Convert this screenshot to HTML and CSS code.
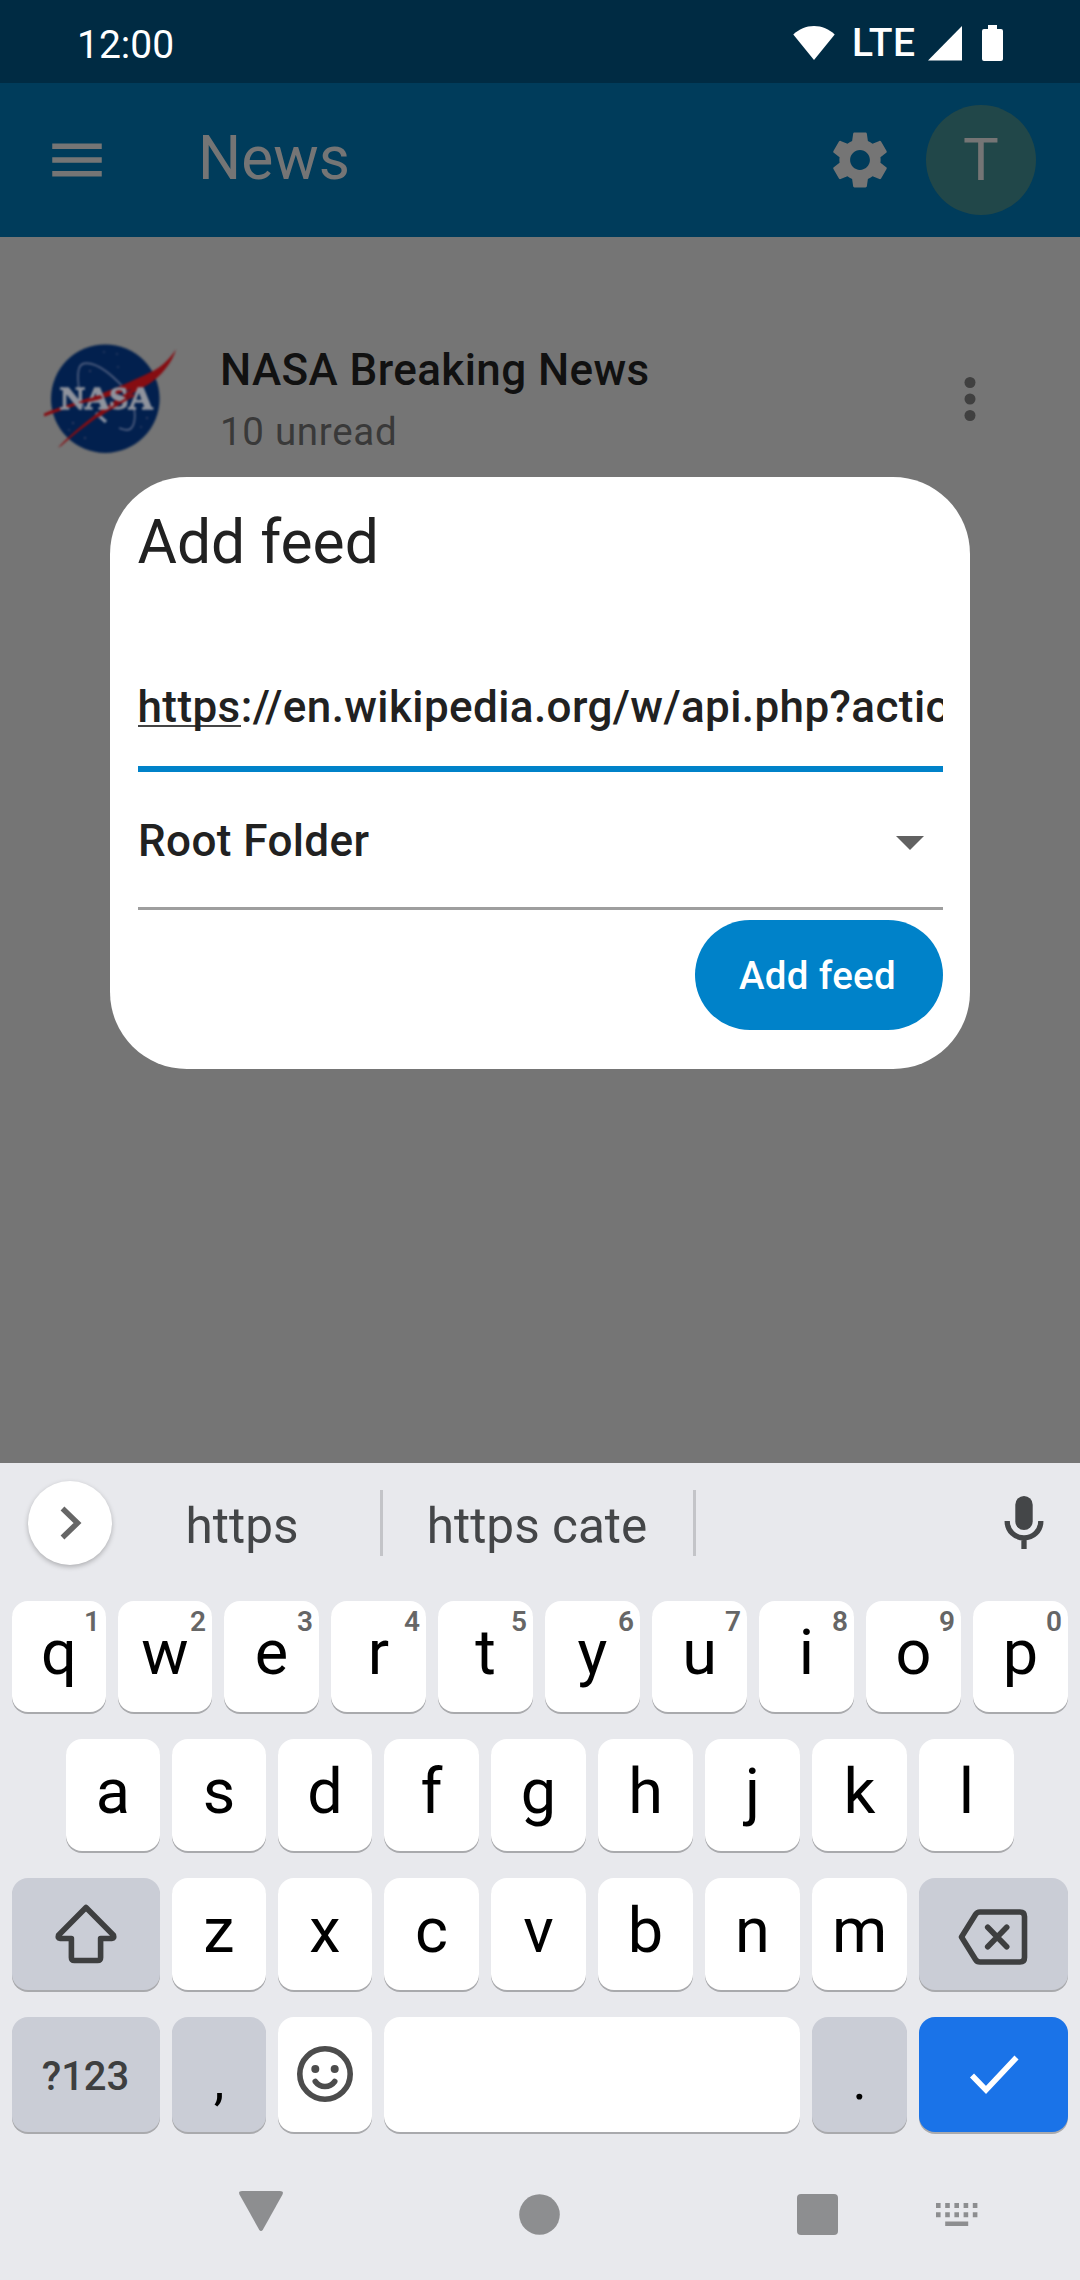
FILE: index.html
```html
<!DOCTYPE html>
<html lang="en">
<head>
<meta charset="utf-8">
<title>News</title>
<link rel="stylesheet" href="styles.css">
</head>
<body>
<div class="screen">
  <header class="status">
    <span class="clock">12:00</span>
    <svg class="wifi" width="42" height="36" viewBox="0 0 42 36"><path d="M21 35 0.3 9.6C6 4 13 1 21 1s15 3 20.700 8.600z"/></svg>
    <span class="lte">LTE</span>
    <svg class="signal" width="34" height="36" viewBox="0 0 34 36"><path d="M0 35.500 34 1v34.500z"/></svg>
    <svg class="battery" width="21" height="36" viewBox="0 0 21 36"><path d="M6 0h9v4h4a2 2 0 0 1 2 2v28a2 2 0 0 1-2 2H2a2 2 0 0 1-2-2V6a2 2 0 0 1 2-2h4z"/></svg>
  </header>
  <div class="appbar">
    <svg class="menu" width="66" height="66" viewBox="0 0 24 24"><path d="M3 18h18v-2H3v2zm0-5h18v-2H3v2zm0-7v2h18V6H3z"/></svg>
    <h1 class="apptitle">News</h1>
    <svg class="gear" width="66" height="66" viewBox="0 0 24 24"><path d="M19.430 12.980c.04-.32.07-.64.07-.98s-.03-.66-.07-.98l2.110-1.650c.19-.15.24-.42.12-.64l-2-3.460c-.12-.22-.39-.3-.61-.22l-2.490 1c-.52-.4-1.080-.73-1.690-.98l-.38-2.650C14.460 2.180 14.250 2 14 2h-4c-.25 0-.46.18-.49.42l-.38 2.650c-.61.25-1.170.59-1.690.98l-2.490-1c-.23-.09-.49 0-.61.22l-2 3.460c-.13.22-.07.49.12.64l2.110 1.650c-.04.32-.07.65-.07.98s.03.66.07.98l-2.110 1.650c-.19.15-.24.42-.12.64l2 3.460c.12.22.39.3.61.22l2.490-1c.52.4 1.080.73 1.690.98l.38 2.650c.03.24.24.42.49.42h4c.25 0 .46-.18.49-.42l.38-2.650c.61-.25 1.170-.59 1.690-.98l2.490 1c.23.09.49 0 .61-.22l2-3.460c.12-.22.07-.49-.12-.64l-2.110-1.650zM12 15.600c-1.980 0-3.600-1.620-3.600-3.600s1.620-3.600 3.600-3.600 3.600 1.620 3.600 3.600-1.620 3.600-3.600 3.600z"/></svg>
    <div class="avatar">T</div>
  </div>
  <main class="feeds">
    <article class="feed">
      <svg class="logo" width="132" height="140" viewBox="44 330 132 140">
        <circle cx="105.300" cy="398.700" r="54.300" fill="#02204e"/>
        <g fill="none" stroke="#4a5a7c" stroke-width="1.800">
          <path d="M84 408C77 388 75 365 84 363.500C98 361 116 378 132 397"/>
          <path d="M133 404C137 418 134 430 127 430c-3 0-5-1-8-2"/>
          <path d="M96 413l10 9" stroke="#8790a0" stroke-width="3.500"/>
        </g>
        <g fill="#2c3c60"><circle cx="117" cy="354" r="1"/><circle cx="104" cy="352" r="1"/><circle cx="90" cy="371" r="1.200"/><circle cx="73" cy="423" r="1.200"/><circle cx="85" cy="438" r="1.200"/><circle cx="147" cy="418" r="1.200"/><circle cx="141" cy="427" r="1"/><circle cx="69" cy="430" r="1"/><circle cx="118" cy="367" r="1"/></g>
        <path d="M76 402C112 391 136 379 153 371C163 366 170 358 176 349.500C172 363 161 376 149 384C124 398 96 416 61 446L58 447.500C82 423 108 405 132 389C112 396 94 401 76 404Z" fill="#860d12"/>
        <path d="M44 413.500C52 410 62 406 78 402v3C64 409 54 413 44 416.500Z" fill="#860d12"/>
        <text x="60" y="409" class="logotext" textLength="93" lengthAdjust="spacingAndGlyphs">NASA</text>
        <path d="M78 402c10-3 17-5 22-7l3 3c-8 3-15 4-23 5zM97 416c9-6 22-14 36-22l2 2c-12 6-25 14-36 21z" fill="#860d12"/>
      </svg>
      <div class="feedtext">
        <div class="feedname">NASA Breaking News</div>
        <div class="feedcount">10 unread</div>
      </div>
      <svg class="more" width="66" height="66" viewBox="0 0 24 24"><circle cx="12" cy="6" r="2"/><circle cx="12" cy="12" r="2"/><circle cx="12" cy="18" r="2"/></svg>
    </article>
    <section class="dialog">
      <h2 class="dialogtitle">Add feed</h2>
      <div class="url"><span class="composing">https</span>://en.wikipedia.org/w/api.php?action</div>
      <div class="folder"><span>Root Folder</span><svg width="28" height="14" viewBox="0 0 28 14"><path d="M0 0h28L14 14z"/></svg></div>
      <button class="add">Add feed</button>
    </section>
  </main>
  <section class="keyboard">
    <div class="suggestions">
      <div class="expand"><svg width="22" height="34" viewBox="0 0 22 34"><path d="M2.500 2.500 17.500 17l-15 14.500"/></svg></div>
      <span class="word first">https</span>
      <span class="word second">https cate</span>
      <svg class="mic" width="66" height="66" viewBox="0 0 66 66"><rect x="24.300" y="6" width="17.400" height="34" rx="8.700"/><path d="M16.200 31c0 10 7.500 16.800 16.800 16.800S49.800 41 49.800 31M33 48v11" class="line"/></svg>
    </div>
    <div class="row r1">
      <div class="key">q<sup>1</sup></div><div class="key">w<sup>2</sup></div><div class="key">e<sup>3</sup></div><div class="key">r<sup>4</sup></div><div class="key">t<sup>5</sup></div><div class="key">y<sup>6</sup></div><div class="key">u<sup>7</sup></div><div class="key">i<sup>8</sup></div><div class="key">o<sup>9</sup></div><div class="key">p<sup>0</sup></div>
    </div>
    <div class="row r2">
      <div class="key">a</div><div class="key">s</div><div class="key">d</div><div class="key">f</div><div class="key">g</div><div class="key">h</div><div class="key">j</div><div class="key">k</div><div class="key">l</div>
    </div>
    <div class="row r3">
      <div class="key dark icon"><svg width="66" height="64" viewBox="0 0 66 64"><path d="M33 5.500 60.500 33.200Q61.500 36.500 59 36.500H47.600V55.500Q47.600 58.500 44.600 58.500H21.400Q18.400 58.500 18.400 55.500V36.500H7Q4.500 36.500 5.500 33.200Z"/></svg></div>
      <div class="key">z</div><div class="key">x</div><div class="key">c</div><div class="key">v</div><div class="key">b</div><div class="key">n</div><div class="key">m</div>
      <div class="key dark icon delete"><svg width="70" height="56" viewBox="0 0 70 56"><path d="M3.500 28 17.500 5.500Q19 3 22 3H62Q66.500 3 66.500 7.500V48.500Q66.500 53 62 53H22Q19 53 17.500 50.500ZM29.700 18.300l19 19.400M48.700 18.300l-19 19.400"/></svg></div>
    </div>
    <div class="row r4">
      <div class="key dark symbols">?123</div>
      <div class="key dark punct">,</div>
      <div class="key icon"><svg class="smile" width="58" height="58" viewBox="0 0 58 58"><circle cx="29" cy="29" r="25.200"/><circle cx="19.300" cy="24" r="4" class="eye"/><circle cx="38.700" cy="24" r="4" class="eye"/><path d="M19.300 36.500Q23 41.500 29 41.500T38.700 36.500"/></svg></div>
      <div class="key"></div>
      <div class="key dark punct">.</div>
      <div class="key enter icon"><svg width="50" height="40" viewBox="0 0 50 40"><path d="M3 20.500 17 35 47.500 2.500"/></svg></div>
    </div>
    <nav class="navbar">
      <svg class="back" width="44" height="40" viewBox="0 0 44 40"><path d="M3 0h38q4 0 2.500 3.500L24 38.500q-2 3-4 0L.5 3.500Q-1 0 3 0z"/></svg>
      <svg class="home" width="41" height="41" viewBox="0 0 41 41"><circle cx="20.500" cy="20.500" r="20.300"/></svg>
      <svg class="recent" width="41" height="41" viewBox="0 0 41 41"><rect width="41" height="41" rx="4"/></svg>
      <svg class="ime" width="42" height="24" viewBox="0 0 42 24"><path d="M0 0h4.600v5H0zM9.200 0h4.600v5H9.200zM18.400 0h4.600v5h-4.600zM27.600 0h4.600v5h-4.600zM36.800 0h4.600v5h-4.600zM0 9.200h4.600v5H0zM9.200 9.200h4.600v5H9.200zM18.400 9.200h4.600v5h-4.600zM27.600 9.200h4.600v5h-4.600zM36.800 9.200h4.600v5h-4.600zM9.200 18.400h23v4.600h-23z"/></svg>
    </nav>
  </section>
</div>
</body>
</html>
```
FILE: styles.css
```css
* { box-sizing: border-box; }
body { margin: 0; font-family: Roboto, "Liberation Sans", sans-serif; }
svg { display: block; flex: none; }
h1, h2 { margin: 0; font-weight: 400; }

.screen { width: 1080px; height: 2280px; display: flex; flex-direction: column; overflow: hidden; background: #757575; }

.status { flex: none; height: 83px; background: #002b43; color: #fff; fill: #fff; display: flex; align-items: flex-start; padding: 25px 77px 0 77px; }
.clock, .lte { white-space: nowrap; font-size: 39px; line-height: 46px; }
.clock { flex: 1; margin-top: -3px; }
.wifi { margin-right: 17px; }
.lte { width: 76px; font-weight: 500; letter-spacing: .5px; margin-top: -5px; }
.battery { margin-left: 20px; }

.appbar { flex: none; height: 154px; background: #003c5b; color: #757575; fill: #757575; display: flex; align-items: center; padding: 0 44px; }
.apptitle { flex: 1; font-size: 60.500px; line-height: 72px; margin-left: 88px; padding-bottom: 2px; }
.gear { margin-right: 33px; }
.avatar { width: 110px; height: 110px; border-radius: 50%; background: #214749; font-size: 60px; line-height: 110px; text-align: center; }

.feeds { flex: none; height: 1226px; position: relative; }
.feed { height: 140px; margin-top: 93px; padding: 0 77px 0 44px; display: flex; align-items: center; }
.feedtext { flex: 1; padding-left: 44px; }
.feedname { font-size: 44px; line-height: 56px; font-weight: 500; letter-spacing: .4px; color: #111; margin-top: 8px; }
.feedcount { font-size: 38.500px; line-height: 68px; letter-spacing: .7px; color: #393939; }
.more { fill: #404040; margin-bottom: 2px; }
.logo { filter: blur(.9px); }
.logotext { font: 700 32px "Liberation Serif", serif; fill: #8f939d; stroke: #8f939d; stroke-width: 1.300px; }

.dialog { position: absolute; left: 110px; top: 240px; width: 860px; height: 592px; border-radius: 77px; background: #fff; color: #212121; padding: 30px 27.500px 0; display: flex; flex-direction: column; }
.dialogtitle { font-size: 60.500px; line-height: 72px; }
.url { margin-top: 102px; height: 90.500px; line-height: 52px; font-size: 44px; font-weight: 500; letter-spacing: .4px; white-space: nowrap; overflow: hidden; border-bottom: 6px solid #0082c9; }
.composing { border-bottom: 2px solid #444; display: inline-block; height: 46px; }
.folder { height: 138.500px; border-bottom: 3px solid #9e9e9e; display: flex; align-items: center; justify-content: space-between; font-size: 44px; font-weight: 500; padding: 4px 19px 0 .5px; letter-spacing: .4px; }
.folder svg { fill: #616161; margin-top: 4px; }
.add { align-self: flex-end; margin: 10px 0 0; width: 248px; height: 110px; border: 0; border-radius: 55px; background: #0082c9; color: #fff; font: 500 38.500px Roboto, sans-serif; letter-spacing: .3px; padding: 0 2px 0 0; }

.keyboard { flex: none; height: 817px; background: #e8e9ed; display: flex; flex-direction: column; }
.suggestions { height: 120px; margin-bottom: 18px; padding: 0 23px 0 28px; display: flex; align-items: center; color: #444648; font-size: 49.500px; }
.expand { width: 84px; height: 84px; border-radius: 50%; background: #fff; box-shadow: 0 2px 5px rgba(0,0,0,.25); display: flex; align-items: center; justify-content: center; padding-left: 2px; }
.expand svg { fill: none; stroke: #666; stroke-width: 5.500px; }
.word { height: 66px; line-height: 66px; padding-top: 3px; text-align: center; border-right: 3px solid #c3c4c8; white-space: nowrap; }
.first { width: 271px; padding-right: 8px; }
.second { width: 313px; padding-right: 2px; }
.mic { margin-left: auto; fill: #444648; }
.mic .line { fill: none; stroke: #444648; stroke-width: 5.300px; }

.row { display: grid; gap: 12px; padding: 0 12px; margin-bottom: 27px; }
.r1 { height: 111px; grid-template-columns: repeat(2, 94px) repeat(8, 95px); }
.r2 { height: 112px; padding: 0 66px; grid-template-columns: repeat(3, 94px) repeat(6, 95px); }
.r3 { height: 112px; grid-template-columns: 148px repeat(2, 94px) repeat(5, 95px) 149px; }
.r4 { height: 115px; margin-bottom: 0; grid-template-columns: 148px repeat(2, 94px) 416px 95px 149px; }
.key { position: relative; background: #fff; border-radius: 16px; box-shadow: 0 2px 0 #a9aaad; display: flex; align-items: center; justify-content: center; font-size: 63px; line-height: 74px; padding-bottom: 7px; color: #000; }
.key sup { position: absolute; top: 5px; right: 6px; width: 16px; text-align: center; font-size: 28px; line-height: 32px; font-weight: 600; color: #666; }
.dark { background: #cacdd6; }
.icon { padding: 0; }
.icon svg { fill: none; stroke: #3e3f40; stroke-width: 5.600px; stroke-linecap: round; stroke-linejoin: round; }
.delete { padding: 5px 2px 0 0; }
.icon .smile { stroke: #4c4c4c; margin-bottom: 2px; }
.icon .eye { fill: #4c4c4c; stroke: none; }
.symbols { font-size: 40px; font-weight: 500; color: #3e3f40; padding: 4px 1px 0 0; }
.punct { font-size: 54px; padding: 13px 0 0; }
.enter { background: #1a73e8; }
.icon.enter svg { stroke: #fff; stroke-linecap: butt; stroke-linejoin: miter; }

.navbar { flex: 1; display: flex; align-items: flex-start; padding: 59px 102px 0 239px; fill: #8d8e90; }
.home { margin: 2.500px 0 0 236px; }
.recent { margin: 3px 0 0 237px; }
.ime { margin: 12px 0 0 auto; }
```
